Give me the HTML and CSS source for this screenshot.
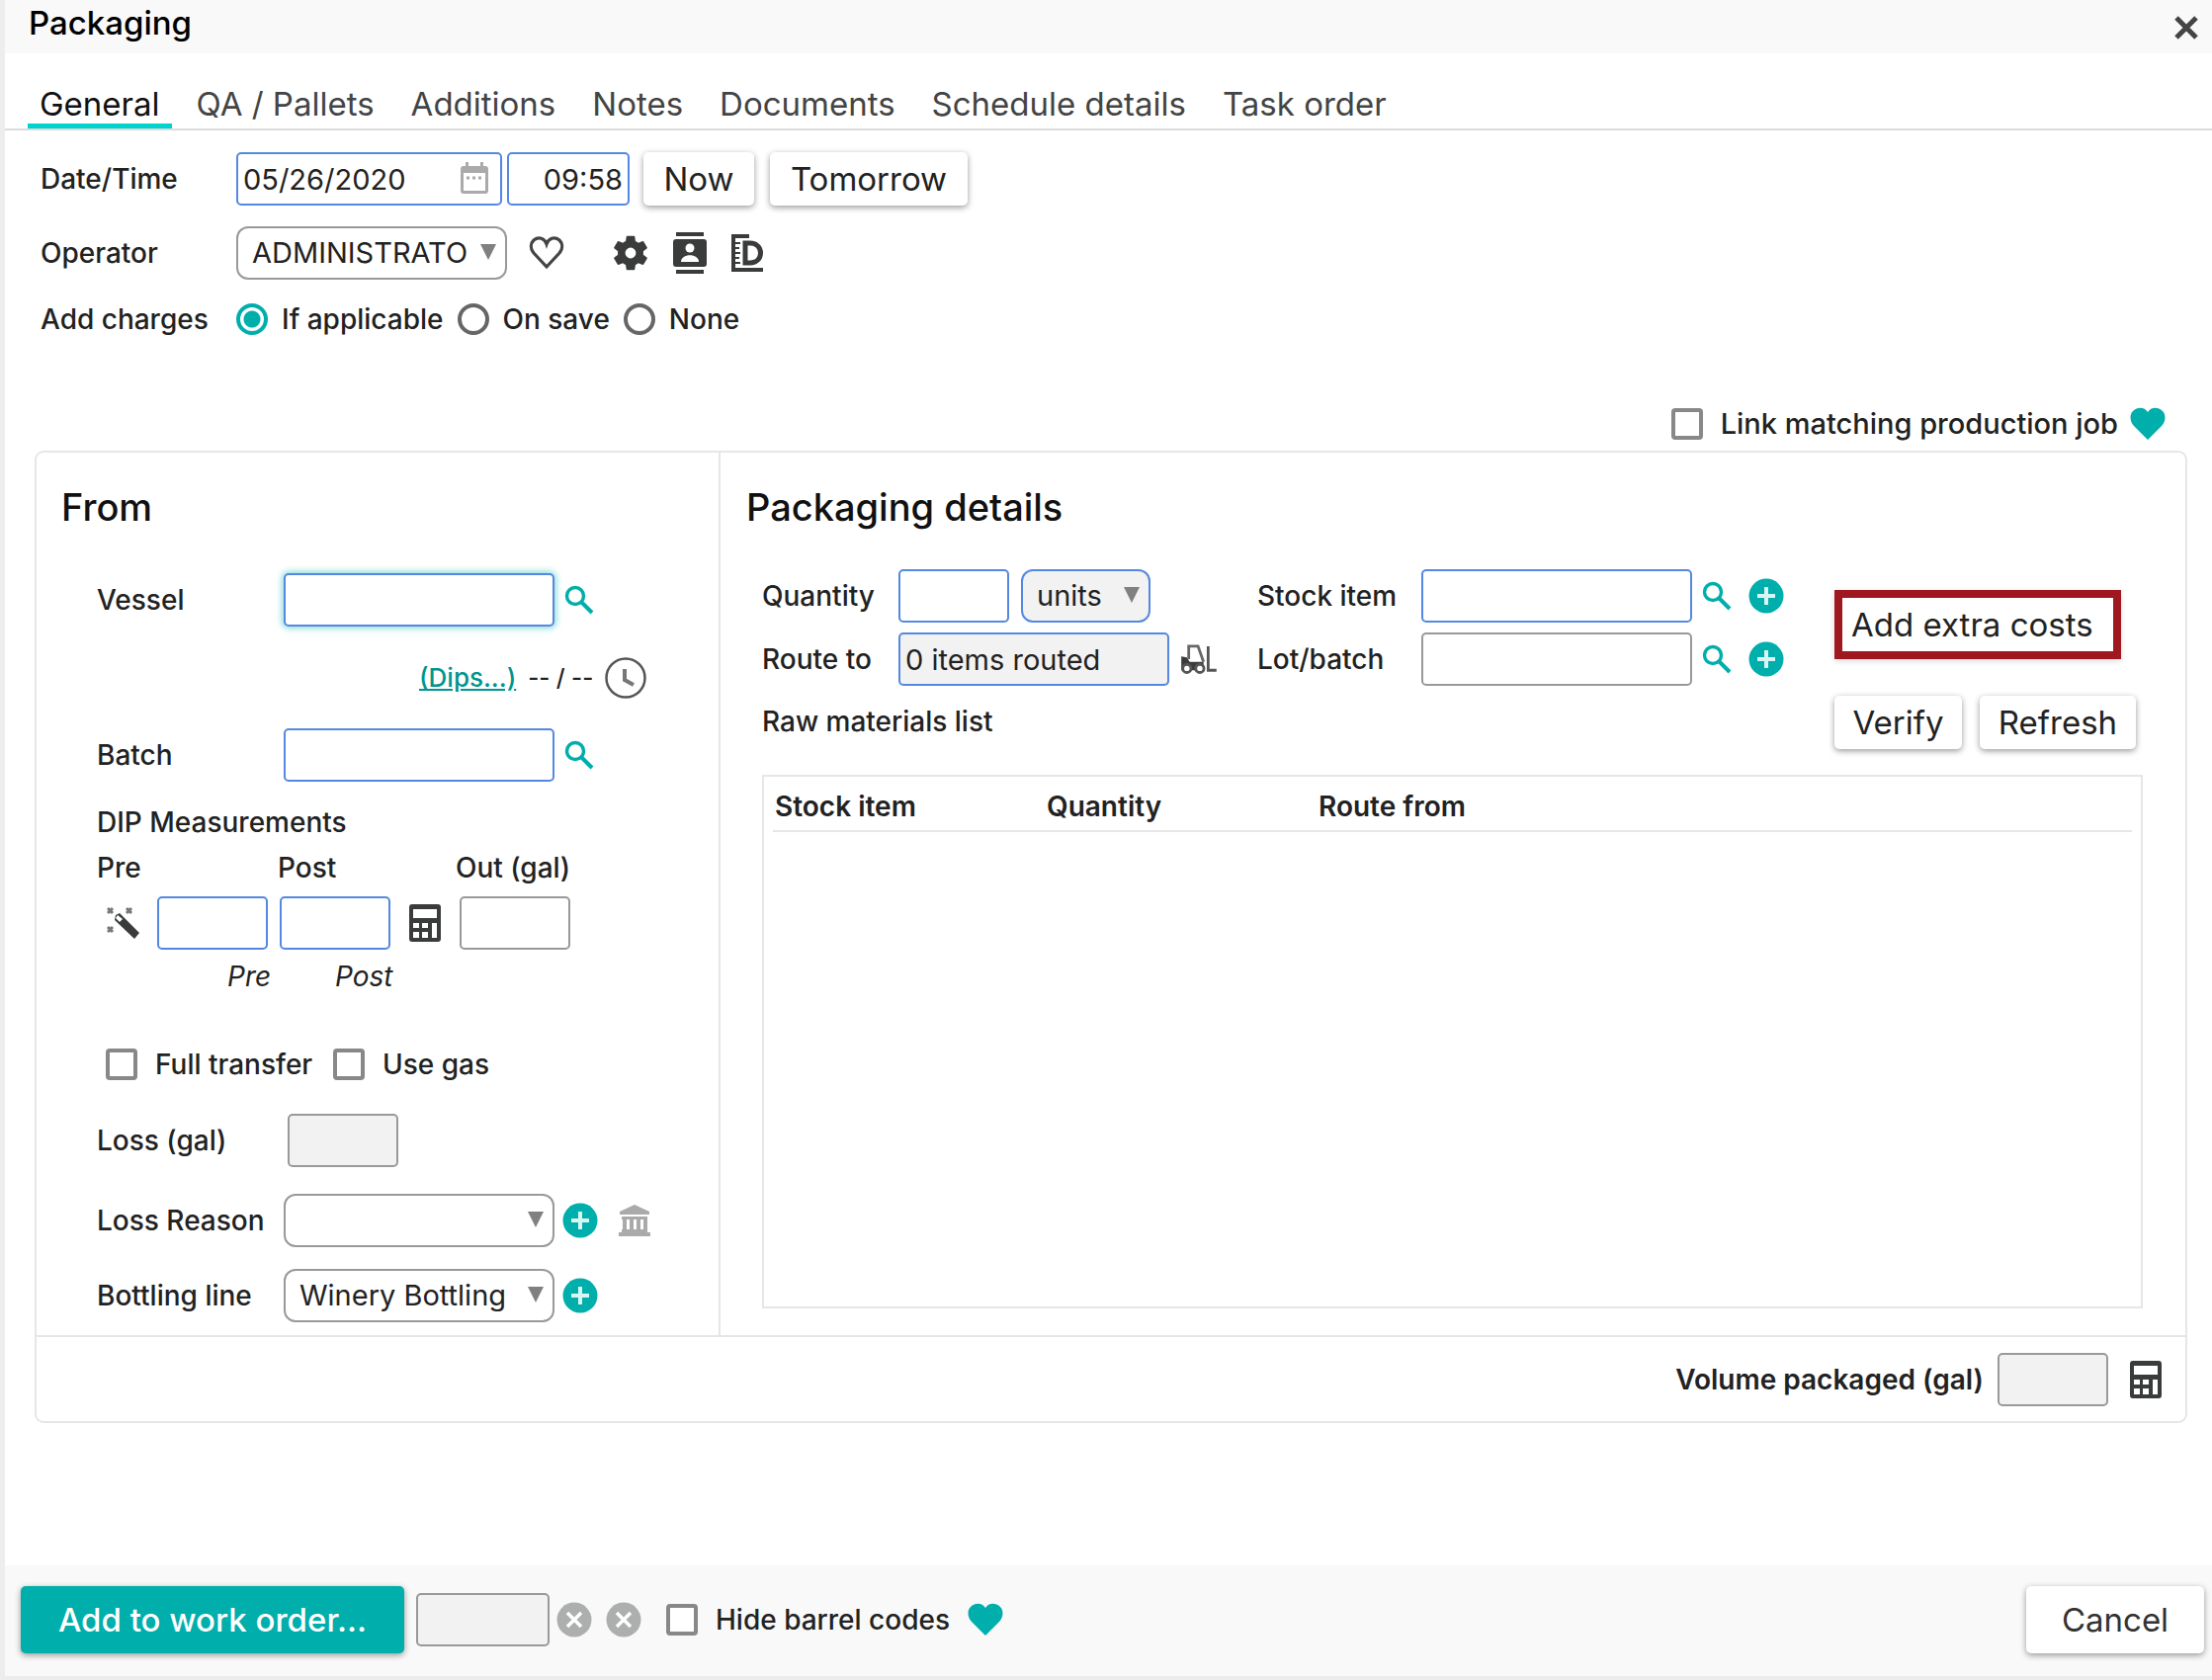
FILE: index.html
```html
<!DOCTYPE html>
<html lang="en">
<head>
    <meta charset="UTF-8">
    <title>Packaging</title>
    <link rel="stylesheet" href="styles.css">
</head>
<body>
    <!-- icon sprites -->
    <svg class="sprites" aria-hidden="true">
        <symbol id="search" viewBox="0 0 30 30"><circle cx="11" cy="11" r="8.5" fill="none" stroke="currentColor" stroke-width="3.4"/><path d="M17.5 17.5L28 28" stroke="currentColor" stroke-width="4"/></symbol>
        <symbol id="plus" viewBox="0 0 36 36"><circle cx="18" cy="18" r="17.5" fill="currentColor"/><path d="M18 9v18M9 18h18" stroke="#d9f5f3" stroke-width="4"/></symbol>
        <symbol id="cross" viewBox="0 0 36 36"><circle cx="18" cy="18" r="17.5" fill="currentColor"/><path d="M11 11l14 14M25 11L11 25" stroke="#fff" stroke-width="3.5"/></symbol>
        <symbol id="heart" viewBox="0 0 36 34"><path d="M18 33L4 19C-1 13 0 7 3 4C8-1 15 0 18 5C21 0 28-1 33 4C36 7 37 13 32 19Z" fill="currentColor"/></symbol>
        <symbol id="calc" viewBox="0 0 32 38"><path fill="currentColor" fill-rule="evenodd" d="M3 0h26a3 3 0 0 1 3 3v32a3 3 0 0 1-3 3H3a3 3 0 0 1-3-3V3a3 3 0 0 1 3-3zM4 5v9h24V5zM4 19v5h6v-5zM13 19v5h6v-5zM4 28v6h6v-6zM13 28v6h6v-6zM23 19v15h5V19z"/></symbol>
    </svg>

    <form class="dialog">
        <header class="dialog-header">
            <h1>Packaging</h1>
            <button type="button" class="icon-button close" aria-label="Close">
                <svg width="24" height="24" viewBox="0 0 24 24"><path d="M2 2l20 20M22 2L2 22" stroke="#444" stroke-width="5"/></svg>
            </button>
        </header>

        <nav class="tabs">
            <a href="#general" class="active">General</a>
            <a href="#qa">QA / Pallets</a>
            <a href="#additions">Additions</a>
            <a href="#notes">Notes</a>
            <a href="#documents">Documents</a>
            <a href="#schedule">Schedule details</a>
            <a href="#tasks">Task order</a>
        </nav>

        <section class="general">
            <div class="row">
                <label class="label" for="date">Date/Time</label>
                <span class="date-box">
                    <input class="field required date" id="date" type="text" value="05/26/2020">
                    <svg class="calendar" width="28" height="32" viewBox="0 0 28 32"><path fill="#aaa" fill-rule="evenodd" d="M5 0h3v4h12V0h3v4h2a3 3 0 0 1 3 3v22a3 3 0 0 1-3 3H3a3 3 0 0 1-3-3V7a3 3 0 0 1 3-3h2zM3 11v18h22V11z"/><path d="M6 16h3M12 16h3M18 16h3" stroke="#aaa" stroke-width="3"/></svg>
                </span>
                <input class="field required time" type="text" value="09:58" aria-label="Time">
                <button type="button" class="button now">Now</button>
                <button type="button" class="button tomorrow">Tomorrow</button>
            </div>
            <div class="row operator">
                <label class="label" for="operator">Operator</label>
                <span class="select"><select id="operator"><option>ADMINISTRATOR</option></select></span>
                <svg class="like" width="36" height="34" viewBox="0 0 36 34"><path d="M18 31L5 17C1 12 2 7 5 4C10 0 16 2 18 8C20 2 26 0 31 4C34 7 35 12 31 17Z" fill="none" stroke="#444" stroke-width="3.2"/></svg>
                <svg class="dark" width="36" height="36" viewBox="2 2 20 20"><path fill="currentColor" d="M19.14 12.94c.04-.3.06-.61.06-.94 0-.32-.02-.64-.07-.94l2.03-1.58c.18-.14.23-.41.12-.61l-1.92-3.32c-.12-.22-.37-.29-.59-.22l-2.39.96c-.5-.38-1.03-.7-1.62-.94l-.36-2.54c-.04-.24-.24-.41-.48-.41h-3.84c-.24 0-.43.17-.47.41l-.36 2.54c-.59.24-1.13.57-1.62.94l-2.39-.96c-.22-.08-.47 0-.59.22L2.74 8.87c-.12.21-.08.47.12.61l2.03 1.58c-.05.3-.09.63-.09.94s.02.64.07.94l-2.03 1.58c-.18.14-.23.41-.12.61l1.92 3.32c.12.22.37.29.59.22l2.39-.96c.5.38 1.03.7 1.62.94l.36 2.54c.05.24.24.41.48.41h3.84c.24 0 .44-.17.47-.41l.36-2.54c.59-.24 1.13-.56 1.62-.94l2.39.96c.22.08.47 0 .59-.22l1.92-3.32c.12-.22.07-.47-.12-.61l-2.01-1.58zM12 15a3 3 0 1 1 0-6 3 3 0 0 1 0 6z"/></svg>
                <svg class="dark" width="34" height="42" viewBox="0 0 34 42"><path d="M3 2h28M3 40h28" stroke="currentColor" stroke-width="4"/><rect y="7" width="34" height="28" rx="3" fill="currentColor"/><circle cx="17" cy="16" r="4.5" fill="#fff"/><path d="M8 30c0-9 18-9 18 0z" fill="#fff"/></svg>
                <svg class="dark" width="32" height="38" viewBox="0 0 32 38" fill="none" stroke="currentColor"><path d="M18 2H2v34h30" stroke-width="4"/><path d="M4 9h5M4 14h4M4 19h5M4 24h4M4 29h5" stroke-width="2"/><path d="M14 9h5c14 0 14 20 0 20h-5z" stroke-width="5"/></svg>
            </div>
            <div class="row charges" role="radiogroup" aria-label="Add charges">
                <span class="label">Add charges</span>
                <input type="radio" name="charges" id="applicable" checked><label for="applicable">If applicable</label>
                <input type="radio" name="charges" id="onsave"><label for="onsave">On save</label>
                <input type="radio" name="charges" id="none"><label for="none">None</label>
            </div>
        </section>

        <div class="link-job">
            <input type="checkbox" id="linkjob"><label for="linkjob">Link matching production job</label>
            <svg class="teal" width="36" height="34"><use href="#heart"/></svg>
        </div>

        <main class="panel">
            <div class="columns">
                <section class="from">
                    <h2>From</h2>
                    <div class="row vessel">
                        <label class="label" for="vessel">Vessel</label>
                        <input class="field required wide focus" id="vessel" type="text">
                        <svg class="teal" width="30" height="30"><use href="#search"/></svg>
                    </div>
                    <div class="row dips">
                        <a href="#dips">(Dips...)</a>
                        <span>-- / --</span>
                        <svg width="42" height="42" viewBox="0 0 42 42" fill="none" stroke="#555"><circle cx="21" cy="21" r="19.5" stroke-width="2.5"/><path d="M20 12v11l9 5" stroke-width="4" stroke="#777"/></svg>
                    </div>
                    <div class="row batch">
                        <label class="label" for="batch">Batch</label>
                        <input class="field required wide" id="batch" type="text">
                        <svg class="teal" width="30" height="30"><use href="#search"/></svg>
                    </div>
                    <h3>DIP Measurements</h3>
                    <div class="dip-labels">
                        <label for="pre">Pre</label>
                        <label for="post">Post</label>
                        <label for="out">Out (gal)</label>
                    </div>
                    <div class="row dip-fields">
                        <svg class="wand dark" width="34" height="34" viewBox="0 0 34 34"><path d="M9 9L13 7 33 27 28 33 8 14Z" fill="currentColor"/><path d="M11 9l5 4-3 3-4-4z" fill="#fff"/><path d="M1 2l5 5M6 2L1 7M20 2l5 5M25 2l-5 5M1 21l5 5M6 21l-5 5" stroke="#777" stroke-width="3"/></svg>
                        <input class="field required small" id="pre" type="text">
                        <input class="field required small" id="post" type="text">
                        <svg class="dip-calc dark" width="32" height="38"><use href="#calc"/></svg>
                        <input class="field small" id="out" type="text">
                    </div>
                    <div class="dip-hints"><em>Pre</em><em>Post</em></div>
                    <div class="row transfer">
                        <input type="checkbox" id="full"><label for="full">Full transfer</label>
                        <input type="checkbox" id="gas"><label for="gas">Use gas</label>
                    </div>
                    <div class="row loss">
                        <label class="label" for="loss">Loss (gal)</label>
                        <input class="field small" id="loss" type="text" disabled>
                    </div>
                    <div class="row reason">
                        <label class="label" for="reason">Loss Reason</label>
                        <span class="select"><select id="reason"><option></option></select></span>
                        <svg class="teal" width="36" height="36"><use href="#plus"/></svg>
                        <svg class="bank" width="32" height="32" viewBox="0 0 32 32"><path fill="#aaa" d="M16 0L31 7v3H1V7zM3 12h26v3H3zM4 15h4v10H4zM11 15h4v10h-4zM18 15h4v10h-4zM25 15h4v10h-4zM3 25h26v3H3zM0 28h32v4H0z"/></svg>
                    </div>
                    <div class="row line">
                        <label class="label" for="line">Bottling line</label>
                        <span class="select"><select id="line"><option>Winery Bottling</option></select></span>
                        <svg class="teal" width="36" height="36"><use href="#plus"/></svg>
                    </div>
                </section>

                <section class="details">
                    <h2>Packaging details</h2>
                    <div class="details-top">
                        <div class="details-fields">
                            <div class="row">
                                <label class="label" for="quantity">Quantity</label>
                                <span class="quantity">
                                    <input class="field required small" id="quantity" type="text">
                                    <span class="select units"><select aria-label="Units"><option>units</option></select></span>
                                </span>
                                <label class="label" for="stock">Stock item</label>
                                <input class="field required wide" id="stock" type="text">
                                <svg class="teal" width="30" height="30"><use href="#search"/></svg>
                                <svg class="teal add" width="36" height="36"><use href="#plus"/></svg>
                            </div>
                            <div class="row">
                                <label class="label" for="route">Route to</label>
                                <span class="quantity">
                                    <input class="field required wide" id="route" type="text" value="0 items routed" readonly>
                                    <svg class="dark" width="36" height="30" viewBox="0 0 38 32"><path d="M0 13l6 1 3 5h15v9H0z" fill="currentColor"/><path d="M8 16V2h10l6 17" fill="none" stroke="#666" stroke-width="3"/><path d="M29 2v26h9" fill="none" stroke="#555" stroke-width="3"/><g fill="#fff" stroke="#555" stroke-width="3"><circle cx="6" cy="26" r="4.4"/><circle cx="20" cy="26" r="4.4"/></g></svg>
                                </span>
                                <label class="label" for="lot">Lot/batch</label>
                                <input class="field wide" id="lot" type="text">
                                <svg class="teal" width="30" height="30"><use href="#search"/></svg>
                                <svg class="teal add" width="36" height="36"><use href="#plus"/></svg>
                            </div>
                            <h3>Raw materials list</h3>
                        </div>
                        <div class="actions">
                            <button type="button" class="button extra">Add extra costs</button>
                            <div class="row">
                                <button type="button" class="button verify">Verify</button>
                                <button type="button" class="button refresh">Refresh</button>
                            </div>
                        </div>
                    </div>
                    <div class="materials">
                        <table>
                            <thead>
                                <tr><th>Stock item</th><th>Quantity</th><th>Route from</th></tr>
                            </thead>
                            <tbody></tbody>
                        </table>
                    </div>
                </section>
            </div>
            <div class="volume">
                <label for="volume">Volume packaged (gal)</label>
                <input class="field small" id="volume" type="text" disabled>
                <svg class="dark" width="32" height="38"><use href="#calc"/></svg>
            </div>
        </main>

        <footer class="dialog-footer">
            <button type="button" class="button primary">Add to work order...</button>
            <input class="field order" type="text" aria-label="Work order" disabled>
            <svg class="clear" width="36" height="36"><use href="#cross"/></svg>
            <svg class="clear" width="36" height="36"><use href="#cross"/></svg>
            <input type="checkbox" id="barrel"><label for="barrel">Hide barrel codes</label>
            <svg class="teal" width="36" height="34"><use href="#heart"/></svg>
            <button type="button" class="button cancel">Cancel</button>
        </footer>
    </form>
</body>
</html>
```
FILE: styles.css
```css
* {
    box-sizing: border-box;
}

body {
    margin: 0;
    background-color: #ededed;
    color: #222;
    font-family: Inter, "Open Sans", sans-serif;
    font-size: 28px;
    font-weight: 500;
    line-height: 32px;
}

input,
select,
button {
    margin: 0;
    font: inherit;
    color: inherit;
}

label,
h3 {
    white-space: nowrap;
}

svg {
    flex: none;
}

.sprites {
    position: absolute;
    width: 0;
    height: 0;
}

.teal {
    color: #00aeab;
}

.dark {
    color: #3a3c3c;
}

.dialog {
    display: flex;
    flex-direction: column;
    min-height: 100vh;
    border-left: 5px solid #ededed;
    border-bottom: 4px solid #ededed;
    background-color: #fff;
}

.dialog-header {
    display: flex;
    justify-content: space-between;
    height: 54px;
    padding: 3px 14px 0 24px;
    background-color: #f9f9f9;
}

h1 {
    margin: 0;
    color: #000;
    font-size: 33px;
    font-weight: 500;
    line-height: 40px;
}

.icon-button {
    padding: 0;
    border: 0;
    background: none;
}

.close {
    height: 54px;
}

/* Tabs */
.tabs {
    display: flex;
    gap: 13px;
    height: 78px;
    padding: 26px 23px 0;
    border-bottom: 2px solid #dcdcdc;
}

.tabs a {
    height: 50px;
    padding: 0 12px;
    color: #444;
    font-size: 33px;
    font-weight: 400;
    line-height: 50px;
    text-decoration: none;
    white-space: nowrap;
}

.tabs .active {
    border-bottom: 5px solid #00d2cd;
    color: #111;
}

/* Form controls */
.row {
    display: flex;
    align-items: center;
}

.label {
    flex: none;
    width: 189px;
}

.field {
    height: 54px;
    padding: 0 5px;
    border: 2px solid #999;
    border-radius: 5px;
    background-color: #fff;
    font-size: 29px;
    font-weight: 400;
    outline: none;
}

.field:disabled,
.field:read-only {
    background-color: #f2f2f2;
}

.required {
    border-color: #5588e0;
}

.focus {
    box-shadow: 0 0 6px 2px #8fdcdc;
}

.small {
    width: 112px;
}

.wide {
    width: 274px;
}

.select {
    position: relative;
    width: 274px;
}

.select::after {
    content: "";
    position: absolute;
    top: 18px;
    right: 11px;
    border: 8px solid transparent;
    border-top: 16px solid #808080;
    border-bottom: 0;
    pointer-events: none;
}

select {
    display: block;
    width: 100%;
    height: 54px;
    padding: 0 36px 0 14px;
    border: 2px solid #999;
    border-radius: 12px;
    background-color: #fff;
    font-size: 29px;
    font-weight: 400;
    appearance: none;
}

.units {
    width: 131px;
}

.units select {
    border-color: #5588e0;
    background-color: #f2f2f2;
}

input[type="checkbox"],
input[type="radio"] {
    flex: none;
    width: 32px;
    height: 32px;
    border: 4px solid #888;
    border-radius: 4px;
    background-color: #fff;
    appearance: none;
}

input[type="radio"] {
    border: 4px solid #666;
    border-radius: 50%;
}

input[type="radio"]:checked {
    border-color: #00aeab;
    background: radial-gradient(circle, #00aeab 8px, #fff 9px);
}

.button {
    height: 54px;
    padding: 0 14px;
    border: 0;
    border-radius: 5px;
    background-color: #fff;
    box-shadow: 0 2px 6px rgba(0, 0, 0, 0.4);
    font-size: 33px;
    font-weight: 400;
    white-space: nowrap;
}

/* General */
.general {
    padding: 22px 36px 0;
}

.general .label {
    width: 198px;
}

.date-box {
    position: relative;
    margin-right: 5px;
}

.date {
    display: block;
    width: 269px;
}

.calendar {
    position: absolute;
    top: 10px;
    right: 14px;
}

.time {
    width: 124px;
    text-align: right;
}

.now {
    width: 112px;
    margin: 0 16px 0 14px;
}

.tomorrow {
    width: 200px;
}

.operator {
    margin-top: 21px;
}

.operator .like {
    margin: 0 24px 0 22px;
}

.operator .dark {
    margin-left: 25px;
}

.charges {
    height: 32px;
    margin-top: 24px;
}

.charges label {
    margin: 0 14px;
}

.link-job {
    display: flex;
    align-items: center;
    justify-content: flex-end;
    margin-top: 73px;
    padding-right: 47px;
    font-size: 29px;
}

.link-job label {
    margin: 0 12px 0 18px;
}

/* Panel */
.panel {
    margin: 10px 25px 0 30px;
    border: 2px solid #e6e6e6;
    border-radius: 9px;
}

.columns {
    display: flex;
    border-bottom: 2px solid #e6e6e6;
}

h2 {
    margin: 0;
    color: #111;
    font-size: 38px;
    font-weight: 500;
    line-height: 44px;
}

h3 {
    margin: 0;
    font-size: 28px;
    font-weight: 500;
    line-height: 32px;
}

.from {
    flex: none;
    width: 692px;
    padding: 33px 0 13px 61px;
    border-right: 2px solid #e6e6e6;
}

.from h2 {
    margin-left: -36px;
}

.vessel {
    margin-top: 45px;
}

.from .wide {
    margin-right: 10px;
}

.dips {
    gap: 12px;
    height: 44px;
    margin-top: 30px;
    padding-left: 326px;
}

.dips a {
    color: #00958f;
    font-size: 26px;
}

.dips span {
    font-size: 24px;
}

.batch {
    margin-top: 29px;
}

.from h3 {
    margin-top: 25px;
}

.dip-labels {
    display: grid;
    grid-template-columns: 183px 180px auto;
    margin-top: 14px;
}

.dip-fields {
    gap: 12px;
    margin-top: 13px;
}

.wand {
    margin: 0 5px 0 10px;
}

.dip-calc {
    margin: 0 7px;
}

.dip-hints {
    display: flex;
    margin-top: 11px;
    padding-left: 132px;
    font-weight: 400;
}

.dip-hints em {
    width: 109px;
}

.transfer {
    margin-top: 57px;
    padding-left: 9px;
}

.transfer label {
    width: 198px;
    padding-left: 18px;
}

.loss {
    margin-top: 34px;
}

.loss .field {
    margin-left: 4px;
}

.reason {
    margin-top: 27px;
}

.line {
    margin-top: 22px;
}

.from .select {
    margin-right: 8px;
}

.bank {
    margin-left: 21px;
}

.details {
    display: flex;
    flex: 1;
    flex-direction: column;
    padding: 33px 43px 27px 26px;
}

.details-top {
    display: flex;
    justify-content: space-between;
    margin: 41px 7px 26px 16px;
}

.details-fields .row {
    margin-bottom: 10px;
}

.details-fields .label {
    width: 138px;
}

.quantity {
    display: flex;
    align-items: center;
    gap: 12px;
    width: 363px;
}

.details-fields .quantity + .label {
    width: 166px;
}

.details-fields .row > .wide {
    margin-right: 10px;
}

.add {
    margin-left: 17px;
}

.details-fields h3 {
    margin-top: 20px;
}

.actions {
    width: 305px;
    padding-top: 21px;
}

.actions .row {
    justify-content: space-between;
    margin-top: 37px;
}

.extra {
    width: 290px;
    height: 70px;
    padding: 0 9px;
    border: 8px solid #a0181f;
    border-radius: 0;
    box-shadow: 0 2px 6px rgba(0, 0, 0, 0.15);
    text-align: left;
}

.verify {
    width: 129px;
}

.refresh {
    width: 158px;
}

.materials {
    flex: 1;
    margin-left: 16px;
    padding: 0 9px;
    border: 2px solid #e6e6e6;
}

table {
    width: 100%;
    border-collapse: collapse;
    table-layout: fixed;
}

th {
    height: 55px;
    padding: 6px 2px 0;
    border-bottom: 2px solid #e6e6e6;
    font-weight: 600;
    text-align: left;
}

th:nth-child(-n+2) {
    width: 275px;
}

.volume {
    display: flex;
    align-items: center;
    justify-content: flex-end;
    height: 85px;
    padding-right: 24px;
    font-weight: 600;
}

.volume .field {
    margin: 0 22px 0 14px;
}

/* Footer */
.dialog-footer {
    display: flex;
    align-items: center;
    height: 112px;
    margin-top: auto;
    padding: 0 8px 2px 16px;
    background-color: #f9f9f9;
}

.primary {
    width: 388px;
    height: 68px;
    background-color: #00aeab;
    color: #fff;
    font-weight: 500;
}

.order {
    width: 135px;
    margin: 0 7px 0 12px;
}

.clear {
    margin-right: 14px;
    color: #adafae;
}

.dialog-footer input[type="checkbox"] {
    margin-left: 11px;
}

.dialog-footer label {
    margin: 0 18px;
}

.cancel {
    width: 180px;
    height: 68px;
    margin-left: auto;
    color: #333;
}
```
